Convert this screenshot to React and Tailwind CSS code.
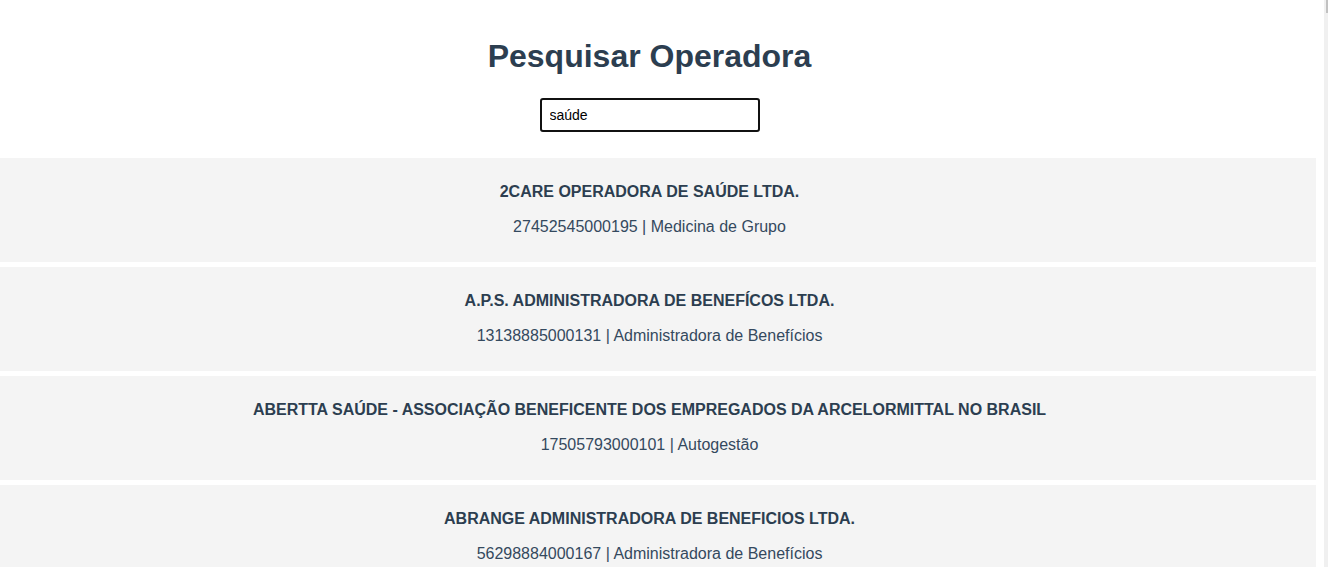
import { useState } from 'react'

const results = [
  { nome: '2CARE OPERADORA DE SAÚDE LTDA.', cnpj: '27452545000195', modalidade: 'Medicina de Grupo' },
  { nome: 'A.P.S. ADMINISTRADORA DE BENEFÍCOS LTDA.', cnpj: '13138885000131', modalidade: 'Administradora de Benefícios' },
  { nome: 'ABERTTA SAÚDE - ASSOCIAÇÃO BENEFICENTE DOS EMPREGADOS DA ARCELORMITTAL NO BRASIL', cnpj: '17505793000101', modalidade: 'Autogestão' },
  { nome: 'ABRANGE ADMINISTRADORA DE BENEFICIOS LTDA.', cnpj: '56298884000167', modalidade: 'Administradora de Benefícios' },
  { nome: 'ACESSO SAÚDE ADMINISTRADORA DE BENEFÍCIOS LTDA.', cnpj: '08325462000154', modalidade: 'Administradora de Benefícios' },
  { nome: 'AFFIX ADMINISTRADORA DE BENEFÍCIOS LTDA', cnpj: '08520646000175', modalidade: 'Administradora de Benefícios' },
]

export default function App() {
  const [busca, setBusca] = useState('saúde')

  return (
    <div className="flex h-screen bg-white font-['Liberation_Sans',Arial,sans-serif]">
      {/* Conteúdo */}
      <div className="flex-1 overflow-hidden">
        <div className="mr-2">
          {/* Cabeçalho */}
          <div className="flex flex-col items-center pt-[38px] pr-[17px]">
            <h1 className="text-[32px] leading-[37px] font-bold text-[#2c3e50]">Pesquisar Operadora</h1>
            <input
              type="text"
              value={busca}
              onChange={(e) => setBusca(e.target.value)}
              className="mt-[23px] h-[34px] w-[220px] rounded-[3px] border-2 border-[#111] px-2 text-[14px] text-black outline-none"
            />
          </div>

          {/* Resultados */}
          <ul className="mt-[26px] flex flex-col gap-[5px]">
            {results.map((op) => (
              <li
                key={op.cnpj}
                className="flex h-[104px] flex-col items-center bg-[#f4f4f4] pt-[25px] pr-[17px] text-center"
              >
                <h3 className="text-[16px] leading-[18px] font-bold text-[#2c3e50]">{op.nome}</h3>
                <p className="mt-[17px] text-[16px] leading-[18px] text-[#34495e]">
                  {op.cnpj} | {op.modalidade}
                </p>
              </li>
            ))}
          </ul>
        </div>
      </div>

      {/* Barra de rolagem */}
      <div className="flex w-[4px] shrink-0 justify-end bg-[#f0f0f0]">
        <div className="h-[13px] w-[2px] bg-[#c1c1c1]" />
      </div>
    </div>
  )
}
